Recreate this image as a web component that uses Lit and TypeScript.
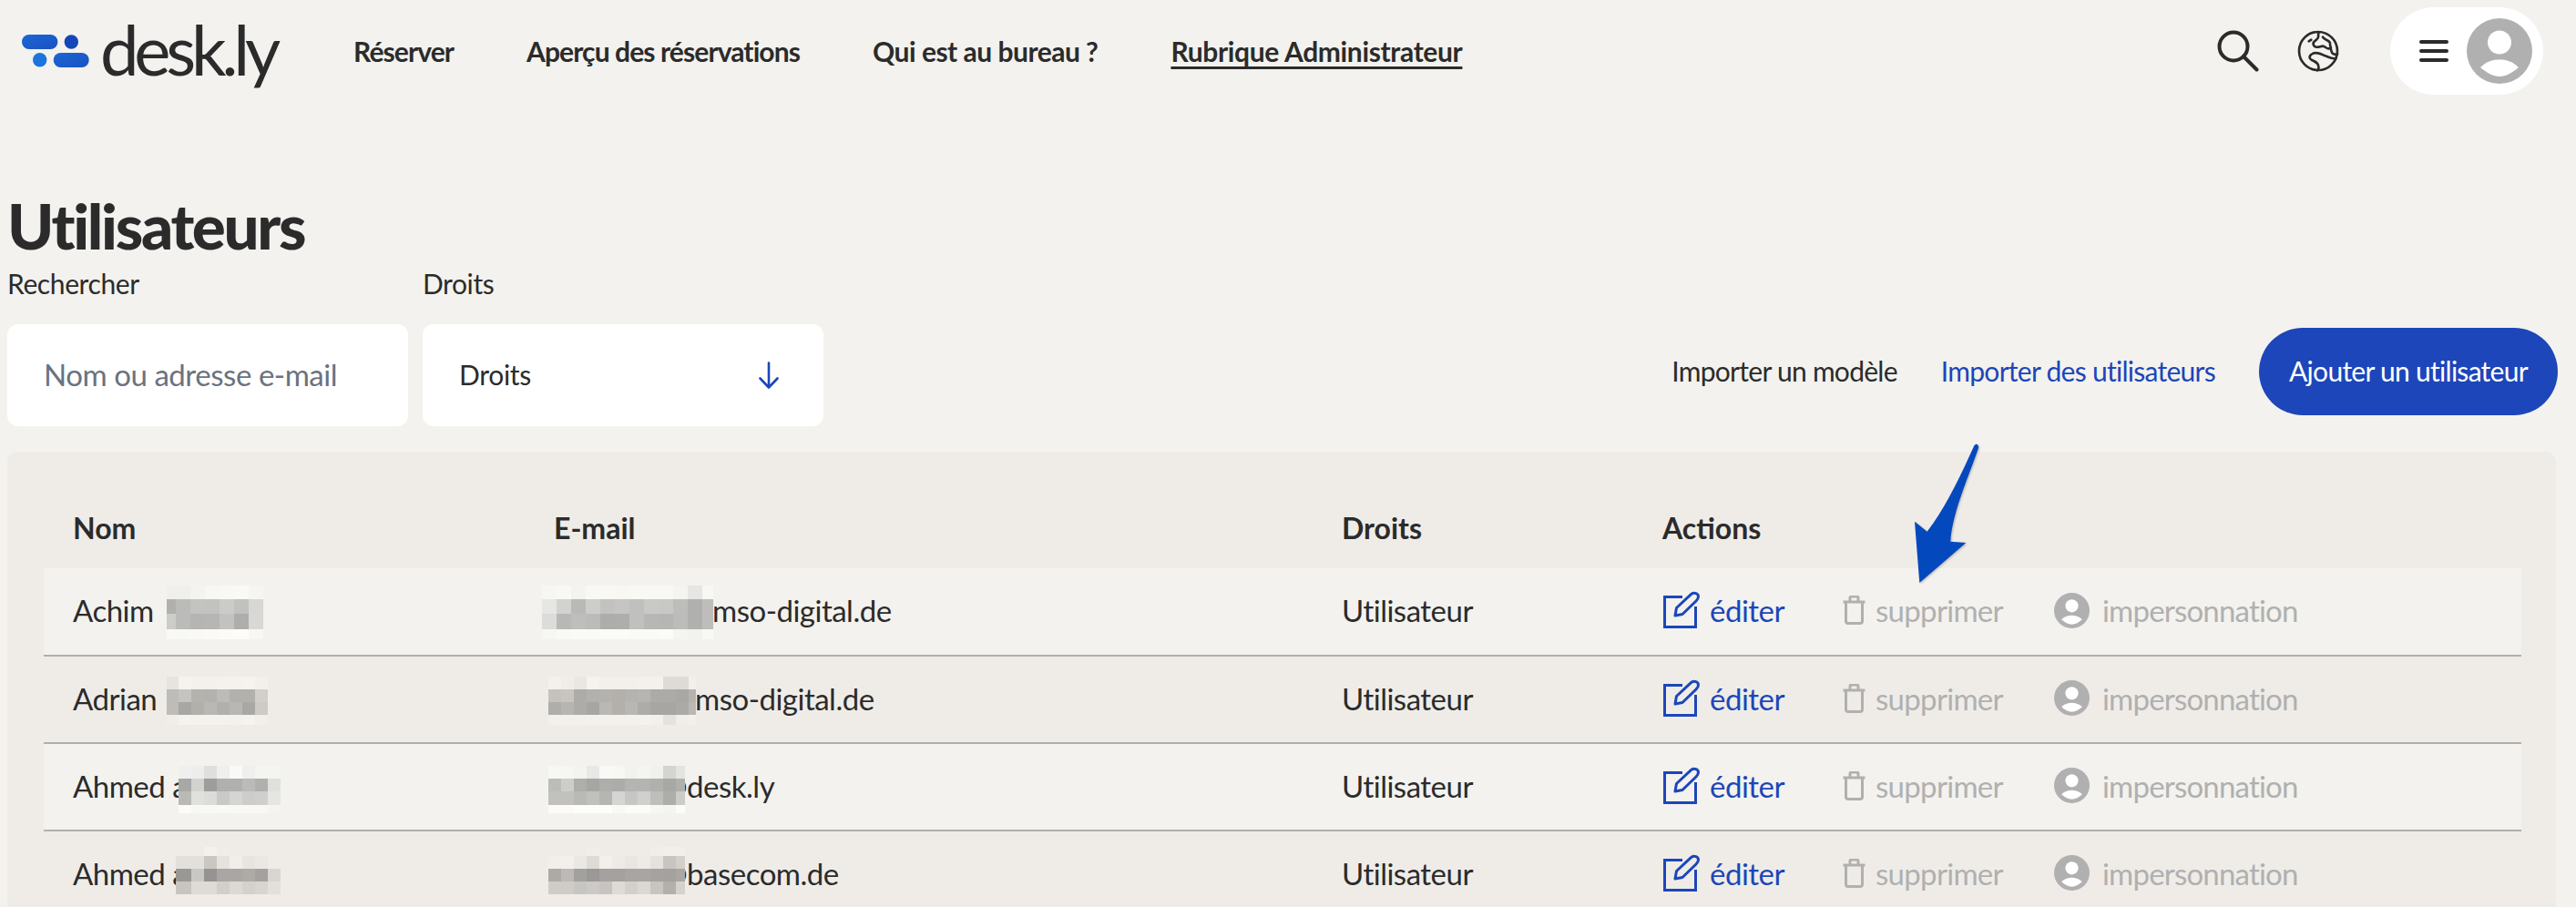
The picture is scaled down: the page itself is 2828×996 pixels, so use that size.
import { LitElement, html, css, svg } from "lit";
import { customElement } from "lit/decorators.js";

type Mosaic = { x: number; y: number; cols: number[]; rows: number[]; c: string[] };

const cols = (first: number, n: number, w: number, last?: number) => {
  const a = first ? [first] : [];
  for (let i = 0; i < n; i++) a.push(w);
  if (last) a.push(last);
  return a;
};

const USERS: { name: string; mail: string; mailX: number; nameM: Mosaic; mailM: Mosaic }[] = [
  {
    name: "Achim",
    mail: "mso-digital.de",
    mailX: 782,
    nameM: {
      x: 183, y: 643, cols: cols(10, 6, 16), rows: [15, 16, 17, 11],
      c: [
        "f0efeb f0efeb f3f3ef f7f7f3 f8f8f4 f9f9f5 f5f5f1",
        "b0b0ae bbbbb9 c3c3c1 c2c2c0 cbcbc9 c1c1bf d7d7d5",
        "ccccca bbbbb9 b5b5b3 b6b6b4 c2c2c0 aeaeac d8d8d6",
        "faf9f6 f8f8f4 faf9f6 fbfaf7 fcfbf8 fdfcf9 f8f7f4",
      ],
    },
    mailM: {
      x: 595, y: 643, cols: cols(0, 11, 16, 12), rows: [15, 16, 17, 11],
      c: [
        "f6f6f2 f8f8f4 f3f3ef f8f8f4 f8f8f4 faf7f3 f8f8f4 f8f8f4 f8f8f4 f4f4f0 e6e6e4 f7f7f3",
        "e6e6e4 d2d2d0 b9b9b7 cdcdcb c2c2c0 c5c5c3 c0c0be c9c9c7 c8c8c6 bdbdbb b0b0ae bdbdbb",
        "dcdcda b8b8b6 bebebc bbbbb9 adadab aeaeac c0c0be b7b7b5 b6b6b4 bcbcba b0b0ae bdbdbb",
        "f6f6f2 f9f9f5 fafaf6 fafaf6 fbfbf7 fbfbf7 fafaf6 fafaf6 fbfbf7 f4f4f0 f2f2ee f8f8f4",
      ],
    },
  },
  {
    name: "Adrian",
    mail: "mso-digital.de",
    mailX: 763,
    nameM: {
      x: 183, y: 743, cols: cols(13, 7, 14), rows: [14, 14, 14, 11],
      c: [
        "e6e4df f6f3ee f4f1ec f4f1ec f5f2ed f5f2ed f6f3ee f3f0eb",
        "bdbcb9 c5c4c0 b5b3ae b3b2ae bdbbb6 b3b1ad b3b1ac d2cfca",
        "bdbcb9 a9a7a4 b2b0ab bab8b4 b2b0ac b9b7b3 aaa8a4 cecbc6",
        "f1eeea f6f3ee f5f2ee f5f2ee f5f2ee f4f1ed f6f3ee f2efeb",
      ],
    },
    mailM: {
      x: 602, y: 743, cols: cols(0, 11, 14, 8), rows: [14, 14, 14, 11],
      c: [
        "f4f1ec f0ede8 eae7e2 f6f3ee f3f0eb f3f0eb f3f0eb f4f1ec f4f1ec dedbd6 dedbd6 f3f0eb",
        "c5c2be c8c5c1 aeaca8 b3b1ad b4b2ae b3b0ac b5b3af b7b5b1 adaba7 adaba7 aaa8a4 b5b3af",
        "b0aeaa b7b5b1 aeaca8 a8a6a2 bab8b4 b3b0ac b9b7b3 aeaca8 a8a6a2 a8a6a2 acaaa6 bab8b4",
        "f4f1ec f3f0eb f3f0eb f4f1ec f4f1ec f4f1ec f4f1ec f5f2ed f3f0eb e5e2dd f1eeea f3f0eb",
      ],
    },
  },
  {
    name: "Ahmed a",
    mail: "@desk.ly",
    mailX: 727,
    nameM: {
      x: 196, y: 841, cols: cols(0, 8, 14), rows: [14, 14, 15, 9],
      c: [
        "efefed ededeb dfdfdb efefed f9f9f6 efefed f4f4f1 f4f4f1",
        "a8a8a6 d2d2d0 9d9d9b b0b0ae b0b0ae bbbbb9 b0b0ae e0e0dd",
        "b9b9b6 e0e0dd dcdcd9 c9c9c7 d5d5d3 cdcdcb cfcfcd e5e5e3",
        "fcfbf8 f7f7f4 f8f8f4 f9f9f6 f8f8f5 faf8f5 f9f8f5 f4f4f1",
      ],
    },
    mailM: {
      x: 602, y: 841, cols: cols(0, 10, 14, 10), rows: [14, 14, 15, 9],
      c: [
        "f7f7f4 f6f6f3 f3f3f0 e8e8e6 f9f9f6 f7f7f4 f1f1ee f4f4f1 f0f0ed d4d4d1 e3e3e0",
        "bcbcba cdcdcb aeaeac a6a6a4 aeaeac acacaa b4b4b2 b4b4b2 b0b0ae a8a8a6 b0b0ae",
        "c1c1be c1c1be b9b9b6 c0c0bd b5b5b2 d5d5d3 c6c6c4 d0d0ce bebebb adadaa cbcbc8",
        "fcfbf8 fcfbf8 fdfdf9 fdfdf9 fdfdf9 f8f8f5 fbfbf8 fbfbf8 f6f6f3 f4f4f1 fbfbf8",
      ],
    },
  },
  {
    name: "Ahmed a",
    mail: "@basecom.de",
    mailX: 727,
    nameM: {
      x: 193, y: 930, cols: cols(17, 7, 14), rows: [10, 14, 14, 14],
      c: [
        "efece8 efece8 f3f1ec f0ede9 efece8 efece8 efece8 efece8",
        "e3e0dc e3e0dc cac7c3 e6e3df f1eeea e8e5e1 ebe8e4 efece8",
        "9a9895 c9c8c5 969492 a9a6a3 a9a6a3 aeaba7 a4a2a0 d9d6d2",
        "c8c5c1 dedbd7 dedbd7 d2cfcb dcd9d5 d4d1cd d8d5d1 e3e0dc",
      ],
    },
    mailM: {
      x: 602, y: 930, cols: cols(0, 10, 14, 10), rows: [10, 14, 14, 14],
      c: [
        "efece8 efece8 efece8 f1eeea efece8 efece8 efece8 efece8 f1eeea f2efeb f2efeb",
        "f2efeb f3f0ec ebe8e4 dedbd7 f3f0ec eeebe7 e9e6e2 eeebe7 e5e2de c8c5c1 d3d0cc",
        "ada9a6 bcb9b6 a3a19e 9b9997 a4a19e a4a19e a8a5a2 a8a5a2 a5a29f a4a19e aaa7a4",
        "cfccc8 cfccc8 c8c6c2 cdcac6 c6c4c0 dedbd7 d3d0cc dbd8d4 c8c5c1 b3b0ac d5d2ce",
      ],
    },
  },
];

const ROW_TOPS = [624, 721, 817, 913];
const ROW_LEFT = 48;
const MAIL_COL_X = 608;

const personShape = svg`
  <circle cx="36" cy="36" r="36" fill="#b0b0b0"></circle>
  <circle cx="36" cy="26.5" r="13" fill="#fff"></circle>
  <path d="M15 54C22 47 29 45.5 36 45.5S50 47 57 54C50 60 43 64 36 64S22 60 15 54Z" fill="#fff"></path>`;

function mosaic(m: Mosaic, rowTop: number) {
  const w = m.cols.reduce((a, b) => a + b, 0);
  const h = m.rows.reduce((a, b) => a + b, 0);
  let y = 0;
  const rects = m.rows.map((rh, ri) => {
    let x = 0;
    const tones = m.c[ri].split(" ");
    const rowRects = m.cols.map((cw, ci) => {
      const r = svg`<rect x=${x} y=${y} width=${cw} height=${rh} fill=${"#" + tones[ci]}></rect>`;
      x += cw;
      return r;
    });
    y += rh;
    return rowRects;
  });
  return html`<svg
    class="mosaic"
    style="left:${m.x - ROW_LEFT}px;top:${m.y - rowTop}px"
    width=${w}
    height=${h}
    viewBox="0 0 ${w} ${h}"
    shape-rendering="crispEdges"
    aria-hidden="true"
  >${rects}</svg>`;
}

@customElement("app-root")
export class AppRoot extends LitElement {
  static styles = css`
    :host {
      display: block;
      position: relative;
      height: 996px;
      overflow: hidden;
      background: #f3f2ee;
      color: #2b2b2b;
      font-family: Lato, "Liberation Sans", sans-serif;
      font-size: 32px;
    }
    .top {
      display: flex;
      align-items: center;
      height: 112px;
      padding: 0 36px 0 24px;
      box-sizing: border-box;
    }
    .logo {
      display: flex;
      align-items: center;
      width: 364px;
      flex: none;
    }
    .logo-text {
      margin-left: 12px;
      font-size: 76px;
      line-height: 112px;
      letter-spacing: -5.2px;
      position: relative;
      top: -2px;
    }
    nav {
      display: flex;
      gap: 80px;
      font-size: 30px;
      font-weight: 700;
      letter-spacing: -0.9px;
    }
    nav .who {
      letter-spacing: -0.5px;
    }
    nav .on {
      letter-spacing: -0.35px;
      text-decoration: underline;
      text-decoration-thickness: 2.5px;
      text-underline-offset: 5px;
    }
    .tools {
      margin-left: auto;
      display: flex;
      align-items: center;
    }
    .search {
      margin-right: 42px;
    }
    .globe {
      margin-right: 56px;
    }
    .pill {
      display: flex;
      align-items: center;
      width: 168px;
      height: 96px;
      box-sizing: border-box;
      padding: 0 12px 0 32px;
      justify-content: space-between;
      border-radius: 48px;
      background: #fff;
    }
    .burger {
      display: flex;
      flex-direction: column;
      gap: 6px;
      width: 32px;
    }
    .burger i {
      height: 4px;
      border-radius: 2px;
      background: #2b2b2b;
    }
    main {
      padding: 0 20px 0 8px;
    }
    h1 {
      margin: 0;
      padding-top: 90px;
      height: 181px;
      box-sizing: border-box;
      font-size: 69px;
      line-height: 92px;
      font-weight: 900;
      letter-spacing: -2.3px;
    }
    .filters {
      display: flex;
      align-items: flex-end;
    }
    .field {
      width: 440px;
      margin-right: 16px;
      flex: none;
    }
    .field label {
      display: block;
      height: 63px;
      font-size: 30px;
      line-height: 36px;
      letter-spacing: -0.4px;
    }
    .box {
      display: flex;
      align-items: center;
      justify-content: space-between;
      width: 100%;
      height: 112px;
      box-sizing: border-box;
      padding: 0 48px 3px 40px;
      border: 0;
      border-radius: 12px;
      background: #fff;
      color: #2b2b2b;
      font: inherit;
      font-size: 30px;
      letter-spacing: -0.3px;
    }
    .box svg {
      margin-top: 3px;
    }
    input.box {
      outline: 0;
      font-size: 33px;
      letter-spacing: -0.45px;
    }
    input.box::placeholder {
      color: #6b7280;
      opacity: 1;
    }
    .actions-top {
      margin-left: auto;
      display: flex;
      align-items: center;
      margin-bottom: 12px;
      font-size: 30px;
      letter-spacing: -0.72px;
    }
    .actions-top span {
      padding-bottom: 3px;
    }
    .blue {
      color: #1c46b9;
    }
    .actions-top .blue {
      margin: 0 48px;
    }
    .actions-top .add {
      display: flex;
      align-items: center;
      justify-content: center;
      width: 328px;
      height: 96px;
      box-sizing: border-box;
      border-radius: 48px;
      background: #1c46b9;
      color: #fff;
    }
    .card {
      margin: 28px 2px 0 0;
      padding: 0 38px 0 40px;
      height: 640px;
      border-radius: 12px;
      background: #efece8;
    }
    .row,
    .head {
      display: grid;
      grid-template-columns: 560px 865px 352px 1fr;
      align-items: center;
      box-sizing: border-box;
    }
    .head {
      height: 128px;
      padding-top: 38px;
      font-weight: 700;
      font-size: 32px;
    }
    .row {
      position: relative;
      height: 96px;
      padding-bottom: 3px;
      border-bottom: 2px solid #b0aeae;
      font-size: 33px;
      letter-spacing: -0.5px;
    }
    .row.first {
      height: 97px;
    }
    .row.odd {
      background: #f3f2ee;
    }
    .c1 {
      padding-left: 32px;
    }
    .mosaic {
      position: absolute;
    }
    .acts {
      display: flex;
      align-items: center;
    }
    .act {
      display: flex;
      align-items: center;
      flex: none;
    }
    .act.edit {
      width: 198px;
      gap: 10px;
    }
    .act.del {
      width: 232px;
      gap: 11px;
      color: #b0b0b0;
    }
    .act.imp {
      gap: 14px;
      color: #b0b0b0;
    }
    .act.del span {
      letter-spacing: -0.7px;
    }
    .act.imp span {
      letter-spacing: -0.8px;
    }
    .pointer {
      position: absolute;
      left: 2000px;
      top: 470px;
      filter: drop-shadow(1px 1px 1px rgba(0, 0, 0, 0.25));
    }
  `;

  private editIcon() {
    return html`<svg width="42" height="42" viewBox="0 0 42 42" fill="none" stroke="#1c46b9" stroke-width="3" aria-hidden="true">
      <path d="M22 6.5H2.5V39.5H36.5V17" stroke-linejoin="miter"></path>
      <path d="M14 27L15.5 18.5L32 3.2C35 1 39.5 3 39.5 6C39.5 8 38.5 9.5 37 11L22 25.5Z" stroke-linejoin="round"></path>
    </svg>`;
  }

  private trashIcon() {
    return html`<svg width="25" height="32" viewBox="0 0 25 32" fill="none" stroke="#b0b0b0" stroke-width="3" aria-hidden="true">
      <path d="M0.5 7H24.5"></path>
      <path d="M8 7V2.5C8 1.5 9 1 10 1H15C16 1 17 1.5 17 2.5V7"></path>
      <path d="M3.5 7V28C3.5 29.5 4.5 30.5 6 30.5H19C20.5 30.5 21.5 29.5 21.5 28V7"></path>
    </svg>`;
  }

  render() {
    return html`
      <header class="top">
        <div class="logo">
          <svg width="74" height="36" viewBox="0 0 74 36" aria-hidden="true">
            <defs>
              <linearGradient id="lg" x1="0" y1="0" x2="1" y2="1">
                <stop offset="0" stop-color="#1b66d6"></stop>
                <stop offset="1" stop-color="#1a52c0"></stop>
              </linearGradient>
            </defs>
            <rect x="0" y="0" width="39.4" height="16" rx="8" fill="url(#lg)"></rect>
            <circle cx="54.3" cy="8" r="7.7" fill="#1546b8"></circle>
            <circle cx="19.7" cy="27.7" r="7.7" fill="#1b75dd"></circle>
            <rect x="34.7" y="20" width="39" height="16" rx="8" fill="url(#lg)"></rect>
          </svg>
          <span class="logo-text">desk.ly</span>
        </div>
        <nav>
          <span>Réserver</span>
          <span>Aperçu des réservations</span>
          <span class="who">Qui est au bureau ?</span>
          <span class="on">Rubrique Administrateur</span>
        </nav>
        <div class="tools">
          <svg class="search" width="46" height="46" viewBox="0 0 46 46" fill="none" stroke="#2b2b2b" stroke-width="4" stroke-linecap="round" aria-hidden="true">
            <circle cx="18" cy="18" r="15.5"></circle>
            <path d="M29 29L43.5 43.5"></path>
          </svg>
          <svg class="globe" width="46" height="46" viewBox="36 39 138 138" fill="none" stroke="#2b2b2b" stroke-width="8" stroke-linecap="round" stroke-linejoin="round" aria-hidden="true">
            <circle cx="105" cy="108" r="63"></circle>
            <path d="M108 46C100 55 112 60 100 70C92 76 84 82 92 92C100 100 112 92 120 92C128 92 132 102 142 100C150 98 146 110 152 116C158 120 165 120 168 118"></path>
            <path d="M120 62C125 72 135 70 142 78C148 84 140 90 147 96"></path>
            <path d="M163 132C150 136 140 128 128 124C116 118 100 110 88 116C76 122 72 132 84 138C96 144 104 146 106 158C108 168 104 170 102 172"></path>
            <path d="M74 76L82 71"></path>
          </svg>
          <div class="pill">
            <div class="burger"><i></i><i></i><i></i></div>
            <svg width="72" height="72" viewBox="0 0 72 72" aria-hidden="true">${personShape}</svg>
          </div>
        </div>
      </header>
      <main>
        <h1>Utilisateurs</h1>
        <section class="filters">
          <div class="field">
            <label>Rechercher</label>
            <input class="box" placeholder="Nom ou adresse e-mail" />
          </div>
          <div class="field">
            <label>Droits</label>
            <div class="box">
              <span>Droits</span>
              <svg width="24" height="30" viewBox="0 0 24 30" fill="none" stroke="#1c46b9" stroke-width="2.6" stroke-linecap="round" stroke-linejoin="round" aria-hidden="true">
                <path d="M12 1.5V28M2.5 18.5L12 28.5L21.5 18.5"></path>
              </svg>
            </div>
          </div>
          <div class="actions-top">
            <span>Importer un modèle</span>
            <span class="blue">Importer des utilisateurs</span>
            <span class="add">Ajouter un utilisateur</span>
          </div>
        </section>
        <section class="card">
          <div class="head">
            <span class="c1">Nom</span>
            <span>E-mail</span>
            <span>Droits</span>
            <span>Actions</span>
          </div>
          ${USERS.map(
            (u, i) => html`<div class="row ${i === 0 ? "first" : ""} ${i % 2 === 0 ? "odd" : ""}">
              <span class="c1">${u.name}</span>
              <span style="padding-left:${u.mailX - MAIL_COL_X}px">${u.mail}</span>
              <span>Utilisateur</span>
              <div class="acts">
                <span class="act edit blue">${this.editIcon()}<span>éditer</span></span>
                <span class="act del">${this.trashIcon()}<span>supprimer</span></span>
                <span class="act imp">
                  <svg width="39" height="39" viewBox="0 0 72 72" aria-hidden="true">${personShape}</svg>
                  <span>impersonnation</span>
                </span>
              </div>
              ${mosaic(u.nameM, ROW_TOPS[i])} ${mosaic(u.mailM, ROW_TOPS[i])}
            </div>`
          )}
        </section>
      </main>
      <svg class="pointer" width="220" height="180" viewBox="0 0 660 540" aria-hidden="true">
        <path d="M502 58C460 150 410 260 347 341L306 308L322 510L475 378L424 374C430 280 480 170 516 66C518 54 508 48 502 58Z" fill="#0349bd"></path>
      </svg>
    `;
  }
}
